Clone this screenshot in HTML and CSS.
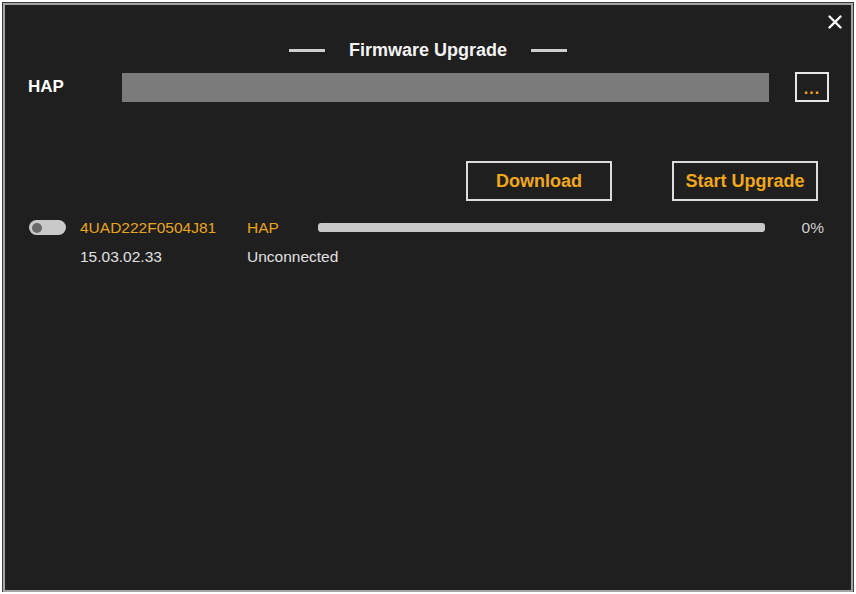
FILE: index.html
```html
<!DOCTYPE html>
<html lang="en">
<head>
    <meta charset="UTF-8">
    <title>Firmware Upgrade</title>
    <link rel="stylesheet" href="styles.css">
</head>
<body>
    <div class="window">
        <button class="close" title="Close">
            <svg width="16" height="16" viewBox="0 0 16 16">
                <path d="M2.5 2.5 L13.5 13.5 M13.5 2.5 L2.5 13.5" stroke="#fff" stroke-width="2.4" stroke-linecap="round"/>
            </svg>
        </button>

        <div class="header">
            <span class="rule"></span>
            <h1>Firmware Upgrade</h1>
            <span class="rule"></span>
        </div>

        <div class="file-row">
            <label class="file-label">HAP</label>
            <div class="file-path"></div>
            <button class="browse">...</button>
        </div>

        <div class="actions">
            <button class="action">Download</button>
            <button class="action">Start Upgrade</button>
        </div>

        <div class="device">
            <div class="toggle"><span class="knob"></span></div>
            <div class="serial">4UAD222F0504J81</div>
            <div class="type">HAP</div>
            <div class="progress"><div class="progress-fill" style="width: 100%"></div></div>
            <div class="percent">0%</div>
            <div></div>
            <div class="version">15.03.02.33</div>
            <div class="state">Unconnected</div>
        </div>
    </div>
</body>
</html>
```

FILE: styles.css
```css
body {
    margin: 0;
    background-color: #fff;
    font-family: "Liberation Sans", Arial, sans-serif;
}
.window {
    position: relative;
    box-sizing: border-box;
    width: 850px;
    height: 589px;
    margin: 3px 0 0 3px;
    border: 2px solid #a4a4a4;
    outline: 1px solid #3a3a3a;
    background-color: #1f1f1f;
    color: #fff;
}
.close {
    position: absolute;
    top: 9px;
    right: 8px;
    padding: 0;
    background: none;
    border: none;
    cursor: pointer;
}
.header {
    display: flex;
    justify-content: center;
    align-items: center;
    gap: 24px;
    padding-top: 32px;
    height: 26px;
}
.header h1 {
    margin: 0;
    font-size: 18px;
    font-weight: bold;
    color: #f2f2f2;
}
.rule {
    width: 36px;
    height: 3px;
    background-color: #cfcfcf;
}
.file-row {
    display: flex;
    align-items: center;
    padding: 9px 21px 0 23px;
}
.file-label {
    width: 94px;
    font-size: 17px;
    font-weight: bold;
}
.file-path {
    width: 647px;
    height: 29px;
    background-color: #7b7b7b;
}
.browse {
    margin-left: 26px;
    width: 34px;
    height: 30px;
    padding: 4px 0 0;
    background: none;
    border: 2px solid #e6e6e6;
    color: #f0a81a;
    font-family: "Liberation Sans", Arial, sans-serif;
    font-size: 16px;
    font-weight: bold;
    letter-spacing: 1px;
    cursor: pointer;
}
.actions {
    display: flex;
    justify-content: flex-end;
    gap: 60px;
    padding: 59px 33px 0 0;
}
.action {
    height: 40px;
    width: 146px;
    background: none;
    border: 2px solid #dcdcdc;
    color: #f0a81a;
    font-family: "Liberation Sans", Arial, sans-serif;
    font-size: 18px;
    font-weight: bold;
    cursor: pointer;
}
.device {
    display: grid;
    grid-template-columns: 51px 167px 71px 447px 1fr;
    grid-auto-rows: 29px;
    align-items: center;
    padding: 12px 27px 0 24px;
    font-size: 15.5px;
}
.toggle {
    width: 37px;
    height: 15px;
    border-radius: 8px;
    background-color: #c9c9c9;
    display: flex;
    align-items: center;
    padding-left: 3px;
    box-sizing: border-box;
}
.knob {
    width: 10px;
    height: 10px;
    border-radius: 50%;
    background-color: #6a6a6a;
}
.serial, .type {
    color: #eaa41c;
}
.version, .state {
    color: #e0e0e0;
}
.progress {
    height: 9px;
    border-radius: 3px;
    background-color: #3a3a3a;
    overflow: hidden;
}
.progress-fill {
    height: 100%;
    background-color: #c8c8c8;
}
.percent {
    text-align: right;
    color: #cfcfcf;
}
```
